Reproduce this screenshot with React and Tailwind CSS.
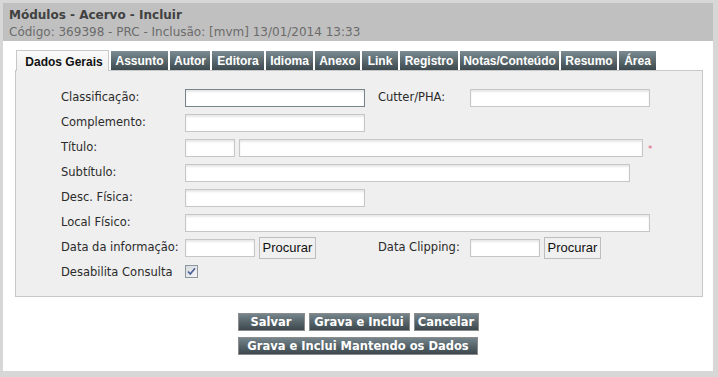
import { useState } from "react";

const tabs = [
  { label: "Dados Gerais", w: "w-[93px]" },
  { label: "Assunto", w: "w-[57px]" },
  { label: "Autor", w: "w-[40px]" },
  { label: "Editora", w: "w-[52px]" },
  { label: "Idioma", w: "w-[47px]" },
  { label: "Anexo", w: "w-[45px]" },
  { label: "Link", w: "w-[36px]" },
  { label: "Registro", w: "w-[58px]" },
  { label: "Notas/Conteúdo", w: "w-[99px]" },
  { label: "Resumo", w: "w-[56px]" },
  { label: "Área", w: "w-[37px]" },
];

const inputBase =
  "h-[18px] border bg-white shadow-[inset_0_2px_2px_#e8e8e8] outline-none text-[11px] px-1";

const Field = ({ w, focus }) => (
  <input
    type="text"
    className={`${inputBase} ${w} ${focus ? "border-[#75858a]" : "border-[#c6c6c6]"}`}
  />
);

const Row = ({ label, children }) => (
  <div className="flex items-center h-[25px]">
    <span className="w-[124px] shrink-0">{label}</span>
    {children}
  </div>
);

const ProcurarBtn = () => (
  <button className="h-[22px] w-[57px] border border-[#bdbdbd] bg-[#f0f0f0] text-[13px] text-[#111] font-['Liberation_Sans',Arial,sans-serif] ml-[4px]">
    Procurar
  </button>
);

const ActionBtn = ({ children, w }) => (
  <button
    className={`${w} h-[18px] border border-[#8c8c8c] bg-gradient-to-b from-[#75858b] to-[#3c484d] text-white font-bold text-[11.5px] leading-[16px] text-center whitespace-nowrap`}
  >
    {children}
  </button>
);

export default function App() {
  const [active] = useState(0);
  const [checked, setChecked] = useState(true);

  return (
    <div className="w-[718px] h-[377px] bg-[#d7d7d7] pl-[3px] pt-[3px] pr-[5px] pb-[6px] font-['DejaVu_Sans',Verdana,sans-serif] text-[11.5px] text-[#2b2b2b] overflow-hidden">
      <div className="flex flex-col h-full bg-white">
        <div className="h-[38px] bg-[#c0c0c0] px-[6px] pt-[4px] flex flex-col">
          <span className="font-bold text-[#414141] text-[12px] leading-[16px]">
            Módulos - Acervo - Incluir
          </span>
          <span className="text-[#6b6b6b] text-[12px] leading-[16px] mt-[1px]">
            Código: 369398 - PRC - Inclusão: [mvm] 13/01/2014 13:33
          </span>
        </div>

        <div className="ml-[12px] mr-[10px] mt-[9px]">
          <div className="flex items-end gap-[2px] pl-[1px] font-['Liberation_Sans',Arial,sans-serif] font-bold text-[12px]">
            {tabs.map((t, i) =>
              i === active ? (
                <div
                  key={t.label}
                  className={`${t.w} h-[21px] -mb-px relative border border-b-0 border-[#c8c8c8] bg-gradient-to-b from-[#fafafa] to-[#efefef] text-[#111] flex items-center justify-center pt-[2px] pl-[3px]`}
                >
                  {t.label}
                </div>
              ) : (
                <div
                  key={t.label}
                  className={`${t.w} h-[19px] bg-gradient-to-b from-[#7c8c92] to-[#3d4a4f] text-white flex items-center justify-center pt-[1px]`}
                >
                  {t.label}
                </div>
              )
            )}
          </div>

          <div className="border border-[#c8c8c8] bg-[#efefef] h-[227px] pt-[14px] pl-[45px]">
            <div className="flex items-center h-[25px]">
              <span className="w-[124px] shrink-0">Classificação:</span>
              <div className="w-[193px] shrink-0">
                <Field w="w-[180px]" focus />
              </div>
              <span className="w-[92px] shrink-0">Cutter/PHA:</span>
              <Field w="w-[180px]" />
            </div>
            <Row label="Complemento:">
              <Field w="w-[180px]" />
            </Row>
            <Row label="Título:">
              <Field w="w-[50px]" />
              <div className="ml-[4px]">
                <Field w="w-[404px]" />
              </div>
              <span className="ml-[5px] mt-[4px] text-[#e0607a] text-[9px]">*</span>
            </Row>
            <Row label="Subtítulo:">
              <Field w="w-[445px]" />
            </Row>
            <Row label="Desc. Física:">
              <Field w="w-[180px]" />
            </Row>
            <Row label="Local Físico:">
              <Field w="w-[465px]" />
            </Row>
            <div className="flex items-center h-[25px]">
              <span className="w-[124px] shrink-0">Data da informação:</span>
              <div className="w-[193px] shrink-0 flex items-center">
                <Field w="w-[70px]" />
                <ProcurarBtn />
              </div>
              <span className="w-[92px] shrink-0">Data Clipping:</span>
              <Field w="w-[70px]" />
              <ProcurarBtn />
            </div>
            <Row label="Desabilita Consulta">
              <span
                onClick={() => setChecked(!checked)}
                className="w-[13px] h-[13px] border border-[#8d989e] bg-gradient-to-br from-[#d6dbdf] to-[#f5f5f5] flex items-center justify-center -mt-[3px]"
              >
                {checked && (
                  <svg width="9" height="9" viewBox="0 0 9 9">
                    <path d="M1 4.5 L3.3 7 L8 1.2" fill="none" stroke="#4b5f99" strokeWidth="1.6" />
                  </svg>
                )}
              </span>
            </Row>
          </div>
        </div>

        <div className="flex flex-col items-center mt-[16px] gap-[6px]">
          <div className="flex gap-[4px]">
            <ActionBtn w="w-[67px]">Salvar</ActionBtn>
            <ActionBtn w="w-[101px]">Grava e Inclui</ActionBtn>
            <ActionBtn w="w-[65px]">Cancelar</ActionBtn>
          </div>
          <ActionBtn w="w-[240px]">Grava e Inclui Mantendo os Dados</ActionBtn>
        </div>
      </div>
    </div>
  );
}
